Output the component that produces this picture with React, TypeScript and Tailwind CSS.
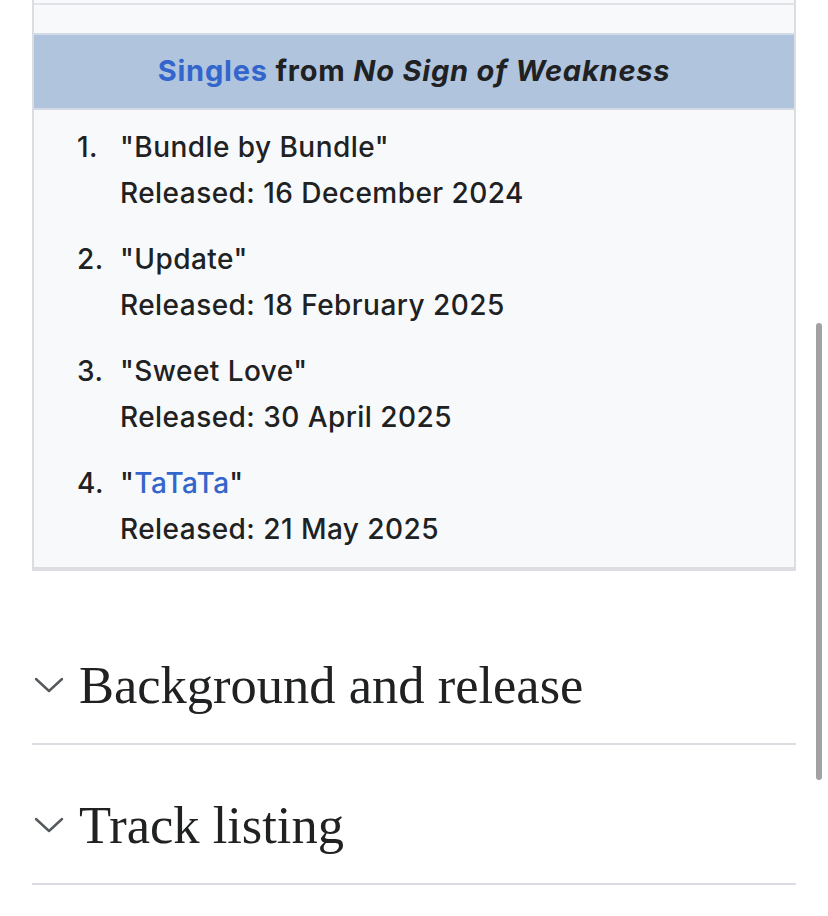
import React from 'react'

type Single = {
  title: string
  released: string
  linked?: boolean
}

const singles: Single[] = [
  { title: 'Bundle by Bundle', released: '16 December 2024' },
  { title: 'Update', released: '18 February 2025' },
  { title: 'Sweet Love', released: '30 April 2025' },
  { title: 'TaTaTa', released: '21 May 2025', linked: true },
]

const sections = ['Background and release', 'Track listing']

function Chevron() {
  return (
    <svg width="30" height="16" viewBox="0 0 30 16" className="shrink-0">
      <polyline
        points="2,2 15,14 28,2"
        fill="none"
        stroke="#54595d"
        strokeWidth="2.4"
        strokeLinecap="round"
        strokeLinejoin="round"
      />
    </svg>
  )
}

export default function App() {
  return (
    <div className="relative min-h-[916px] bg-white font-['Inter','Noto_Sans',sans-serif] text-[#202122]">
      <div className="px-[32px]">
        {/* infobox tail */}
        <div className="border-x-2 border-b-4 border-[#dcdde3] bg-[#f8f9fa]">
          <div className="h-[3px]" />
          <div className="h-[2px] bg-[#e2e3e8]" />
          <div className="h-[28px]" />
          <div className="flex h-[77px] items-center justify-center border-y-2 border-[#d4dae4] bg-[#b0c4de] pb-[2px] text-[29px] font-bold tracking-[0.8px]">
            <span className="text-[#3366cc]">Singles</span>
            <span className="whitespace-pre"> from </span>
            <i>No Sign of Weakness</i>
          </div>
          <ol className="flex flex-col gap-[20px] pb-[15px] pl-[43px] pt-[14px] text-[28px] font-medium leading-[46px] tracking-[0.45px]">
            {singles.map((s, i) => (
              <li key={s.title} className="flex">
                <span className="w-[43px] shrink-0">{i + 1}.</span>
                <div>
                  <div>
                    "{s.linked ? <span className="text-[#3366cc]">{s.title}</span> : s.title}"
                  </div>
                  <div>Released: {s.released}</div>
                </div>
              </li>
            ))}
          </ol>
        </div>

        {/* collapsed sections */}
        <div className="pt-[34px]">
          {sections.map(title => (
            <div
              key={title}
              className="flex items-center gap-[15px] border-b-2 border-[#dcdde3] pb-[32px] pt-[54px]"
            >
              <div className="pl-[2px]">
                <Chevron />
              </div>
              <h2 className="font-['Liberation_Serif',serif] text-[52.5px] font-normal leading-[52px] text-[#202122]">
                {title}
              </h2>
            </div>
          ))}
        </div>
      </div>

      {/* scroll indicator */}
      <div className="absolute right-[6px] top-[323px] h-[457px] w-[6px] rounded-full bg-[#a2a2a2]" />
    </div>
  )
}
